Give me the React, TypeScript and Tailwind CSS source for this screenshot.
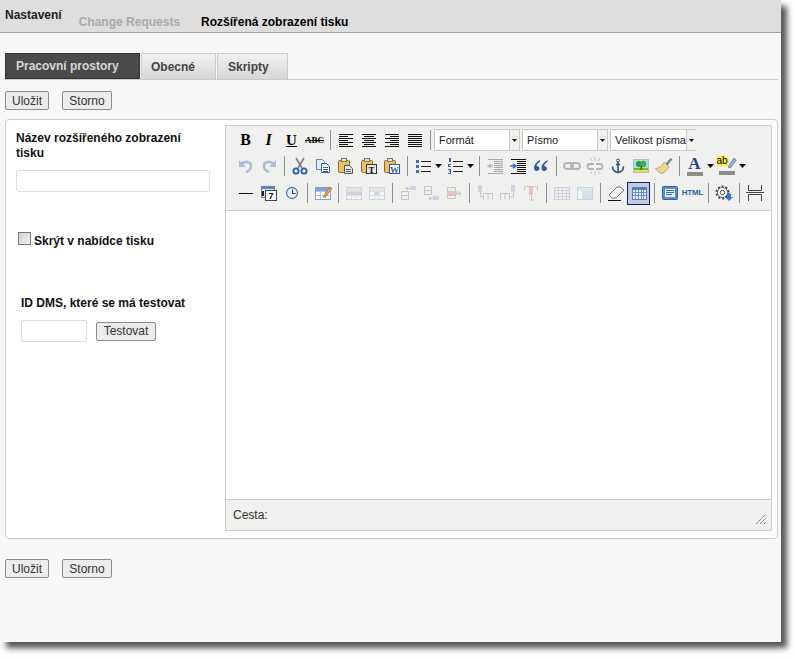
import React from "react";

const Svg = ({ children, dim }: { children: React.ReactNode; dim?: boolean }) => (
  <svg width="20" height="20" viewBox="0 0 20 20" fill="none" className={dim ? "opacity-35" : ""}>
    {children}
  </svg>
);

const Lines = ({ rows }: { rows: [number, number][] }) => (
  <>
    {rows.map(([a, b], i) => (
      <rect key={i} x={a} y={4 + i * 2} width={b - a} height="1" fill="#111" />
    ))}
  </>
);

const Letter = ({ cls, children }: { cls: string; children: React.ReactNode }) => (
  <span className={`leading-none text-black font-['Liberation_Serif',serif] font-bold ${cls}`}>{children}</span>
);

const Clip = ({ x = 2 }: { x?: number }) => (
  <>
    <rect x={x + 0.5} y="4.5" width="11" height="12" rx="1" fill="#e8c264" stroke="#8a6a2a" />
    <rect x={x + 3.5} y="2.5" width="5" height="3" fill="#f3e3b0" stroke="#777" />
  </>
);

const Grid = ({ head, cell }: { head: string; cell?: string }) => (
  <>
    <rect x="2.5" y="4.5" width="15" height="12" fill="#fff" stroke="#8aa0c4" />
    <rect x="3" y="5" width="14" height="3" fill={head} />
    {cell && <rect x="8" y="8" width="5" height="4" fill={cell} />}
    <path d="M3 8.5h14M3 12.5h14M7.5 8v8M12.5 8v8" stroke="#b4c4dc" />
  </>
);

const Split = ({ d }: { d: string }) => <path d={d} stroke="#777" fill="none" />;

const icons: Record<string, React.ReactNode> = {
  b: <Letter cls="text-[16px]">B</Letter>,
  i: <Letter cls="text-[16px] italic">I</Letter>,
  u: <Letter cls="text-[15px] underline">U</Letter>,
  abc: <Letter cls="text-[9px] line-through">ABC</Letter>,
  left: <Svg><Lines rows={[[3, 17], [3, 12], [3, 17], [3, 12], [3, 17], [3, 12], [3, 17]]} /></Svg>,
  center: <Svg><Lines rows={[[3, 17], [5, 15], [3, 17], [5, 15], [3, 17], [5, 15], [3, 17]]} /></Svg>,
  right: <Svg><Lines rows={[[3, 17], [8, 17], [3, 17], [8, 17], [3, 17], [8, 17], [3, 17]]} /></Svg>,
  full: <Svg><Lines rows={[[3, 17], [3, 17], [3, 17], [3, 17], [3, 17], [3, 17], [3, 17]]} /></Svg>,
  undo: <Svg dim><path d="M5 8c3-3 10-3 10 2 0 3-2 5-5 6" stroke="#2f62ac" strokeWidth="2.6" /><path d="M3 4v7h7z" fill="#2f62ac" /></Svg>,
  redo: <Svg dim><path d="M15 8c-3-3-10-3-10 2 0 3 2 5 5 6" stroke="#2f62ac" strokeWidth="2.6" /><path d="M17 4v7h-7z" fill="#2f62ac" /></Svg>,
  cut: (
    <Svg>
      <path d="M6 2l6 10M14 2L8 12" stroke="#7a7f88" strokeWidth="1.6" />
      <circle cx="6" cy="15" r="2.6" stroke="#2b5aa8" strokeWidth="1.8" />
      <circle cx="14" cy="15" r="2.6" stroke="#2b5aa8" strokeWidth="1.8" />
    </Svg>
  ),
  copy: (
    <Svg>
      <path d="M3.5 3.5h6l2 2v8h-8z" fill="#e4eefa" stroke="#5d86c0" />
      <path d="M8.5 7.5h5l3 3v6h-8z" fill="#fff" stroke="#2f62ac" />
      <path d="M10 11.5h5M10 13.5h5M10 15.5h5" stroke="#2f62ac" />
    </Svg>
  ),
  paste: (
    <Svg>
      <Clip />
      <path d="M8.5 9.5h5l3 3v5h-8z" fill="#e8e8e8" stroke="#555" />
      <path d="M10 13.5h5M10 15.5h5" stroke="#555" />
    </Svg>
  ),
  pastetext: (
    <Svg>
      <Clip />
      <rect x="7.5" y="8.5" width="10" height="9" fill="#e8e8e8" stroke="#333" />
      <text x="12.5" y="16.5" textAnchor="middle" fontSize="9" fontWeight="700" fill="#111" fontFamily="Liberation Serif, serif">T</text>
    </Svg>
  ),
  pasteword: (
    <Svg>
      <Clip />
      <rect x="7.5" y="8.5" width="10" height="9" fill="#fff" stroke="#2b5aa8" />
      <text x="12.5" y="16.5" textAnchor="middle" fontSize="9" fontWeight="700" fill="#2b5aa8" fontFamily="Liberation Serif, serif">W</text>
    </Svg>
  ),
  ul: (
    <Svg>
      <path d="M8 5.5h10M8 10.5h10M8 15.5h10" stroke="#222" />
      <path d="M3 4h3v3H3zM3 9h3v3H3zM3 14h3v3H3z" fill="#3d6db5" />
    </Svg>
  ),
  ol: (
    <Svg>
      <path d="M8 5.5h10M8 10.5h10M8 15.5h10" stroke="#222" />
      <path d="M4 2h2v4H4zM3 8h3v1H4v1h2v1H3zM3 13h3v5H3v-1h2v-1H4v-1h1v-1H3z" fill="#2b5aa8" />
    </Svg>
  ),
  outdent: (
    <Svg dim>
      <path d="M3 3.5h15M9 5.5h9M9 7.5h9M9 9.5h9M9 11.5h9M9 13.5h9M9 15.5h9M3 17.5h15" stroke="#222" />
      <path d="M8 10H4M6 8l-3 2 3 2" stroke="#2b5aa8" strokeWidth="1.4" />
    </Svg>
  ),
  indent: (
    <Svg>
      <path d="M3 3.5h15M9 5.5h9M9 7.5h9M9 9.5h9M9 11.5h9M9 13.5h9M9 15.5h9M3 17.5h15" stroke="#111" />
      <path d="M2 10h5M5 8l3 2-3 2" stroke="#2b78d0" strokeWidth="1.6" />
    </Svg>
  ),
  quote: (
    <Svg>
      <path d="M9 4C5 6 3 9 3 12c0 2 1 3 2.5 3S8.500 14 8.500 12.500 7 10 5.500 10C6 8 7.500 6.500 9 6zM16.500 4c-4 2-6 5-6 8 0 2 1 3 2.500 3s3-1 3-2.500S14.500 10 13 10c.5-2 2-3.500 3.500-4z" fill="#2b5aa8" />
    </Svg>
  ),
  link: (
    <Svg dim>
      <rect x="2" y="7" width="9" height="6" rx="3" stroke="#444" strokeWidth="1.8" />
      <rect x="9" y="7" width="9" height="6" rx="3" stroke="#444" strokeWidth="1.8" />
    </Svg>
  ),
  unlink: (
    <Svg dim>
      <path d="M9 8H5a2.500 2.500 0 000 5h4M11 8h4a2.500 2.500 0 010 5h-4" stroke="#444" strokeWidth="1.8" />
      <path d="M10 1v4M10 15v4M5 2l2 3M15 2l-2 3M5 18l2-3M15 18l-2-3" stroke="#666" />
    </Svg>
  ),
  anchor: (
    <Svg>
      <circle cx="10" cy="4.5" r="1.5" stroke="#2f4f80" />
      <path d="M10 6v10M8 8.5h4" stroke="#2f4f80" strokeWidth="1.6" />
      <path d="M4.500 10.500c0 3.500 2.500 5.500 5.500 6 3-.5 5.500-2.500 5.500-6" stroke="#2f4f80" strokeWidth="1.6" />
    </Svg>
  ),
  image: (
    <Svg>
      <rect x="2.5" y="3.5" width="15" height="13" fill="#a8dcef" stroke="#bbb" />
      <rect x="3" y="12" width="14" height="2" fill="#5ec04a" />
      <rect x="3" y="14" width="14" height="2" fill="#eee04a" />
      <circle cx="8" cy="8" r="3" fill="#2f9a34" />
      <circle cx="12" cy="8" r="3.2" fill="#3fae3f" />
      <rect x="9.5" y="10" width="1.5" height="4" fill="#6a4a20" />
    </Svg>
  ),
  clean: (
    <Svg>
      <path d="M11 8l5.500-6 2 1.500-5.500 6.500z" fill="#7f8794" />
      <path d="M10 6l5 5c-2 3.500-4.500 5.500-7 6.500-2.500-.5-5-2.500-6.500-5 3.500 0 6.500-2.500 8.500-6.500z" fill="#ecd68e" stroke="#a8924e" strokeWidth=".7" />
    </Svg>
  ),
  fore: (
    <div className="relative flex h-5 w-5 flex-col items-center">
      <span className="font-['Liberation_Serif',serif] text-[17px] font-bold leading-[15px] text-[#23427e]">A</span>
      <span className="mt-px h-1 w-4 bg-[#8c8c8c]" />
    </div>
  ),
  back: (
    <div className="relative flex h-5 w-5 flex-col">
      <div className="flex h-[15px] items-start">
        <span className="h-2.5 bg-[#ffee44] font-['Liberation_Sans',sans-serif] text-[10px] leading-[9px] text-black">ab</span>
        <svg width="9" height="13" viewBox="0 0 9 13" fill="none"><path d="M0 11l6-9 2.500 2-6 8z" fill="#8fb0dc" stroke="#55709c" strokeWidth=".7" /></svg>
      </div>
      <span className="ml-0.5 h-1 w-4 bg-[#8c8c8c]" />
    </div>
  ),
  hr: <Svg><rect x="3" y="10" width="14" height="1" fill="#111" /></Svg>,
  date: (
    <Svg>
      <rect x="2.5" y="3.5" width="13" height="11" fill="#dfe6f2" stroke="#5d7fb4" />
      <rect x="3" y="4" width="12" height="2" fill="#5d86c0" />
      <rect x="6.5" y="7.5" width="11" height="10" fill="#f4f4f4" stroke="#444" />
      <text x="12" y="16" textAnchor="middle" fontSize="9" fontWeight="700" fill="#111" fontFamily="Liberation Sans, sans-serif">7</text>
      <rect x="3" y="8" width="2" height="5" fill="#222" />
    </Svg>
  ),
  time: (
    <Svg>
      <circle cx="10" cy="10" r="5.5" fill="#e8eef8" stroke="#4f78b4" strokeWidth="1.3" />
      <path d="M10.500 6.500v4h3" stroke="#333" />
    </Svg>
  ),
  table: (
    <Svg>
      <Grid head="#7ea4d8" />
      <path d="M11 12l6-8 2 1.500-6 8-2.500.8z" fill="#e8a84a" stroke="#8a5a20" strokeWidth=".6" />
    </Svg>
  ),
  rowp: <Svg dim><Grid head="#cfcfcf" /><rect x="3" y="9" width="14" height="3" fill="#8aa0c4" /></Svg>,
  cellp: <Svg dim><Grid head="#cfcfcf" cell="#7ea4d8" /></Svg>,
  rowb: <Svg dim><Split d="M3.500 8.500h7v8h-7zM3.500 12.500h7" /><path d="M8 5.500h4M10 3.500L8 5.500l2 2" stroke="#777" /><rect x="12" y="3" width="6" height="4" fill="#7ea4d8" /></Svg>,
  rowa: <Svg dim><Split d="M3.500 3.500h7v8h-7zM3.500 7.500h7" /><path d="M8 15.500h4M10 13.500l-2 2 2 2" stroke="#777" /><rect x="12" y="13" width="6" height="4" fill="#7ea4d8" /></Svg>,
  rowd: <Svg dim><Split d="M3.500 4.500h8v11h-8zM3.500 8.500h8M3.500 12.500h8" /><rect x="3" y="8" width="10" height="4" fill="#e07070" /><path d="M13 10.500h4M15 8.500l2 2-2 2" stroke="#777" /></Svg>,
  colb: <Svg dim><Split d="M8.500 16.500v-6h9v6M13 10.500v6" /><rect x="3" y="2" width="4" height="7" fill="#7ea4d8" /><path d="M5.500 9v5h3" stroke="#777" /></Svg>,
  cola: <Svg dim><Split d="M2.500 16.500v-6h9v6M7 10.500v6" /><rect x="13" y="2" width="4" height="7" fill="#7ea4d8" /><path d="M15.500 9v5h-3" stroke="#777" /></Svg>,
  cold: <Svg dim><path d="M3.500 7.500v-4h13v4" stroke="#777" /><rect x="8" y="3" width="4" height="9" fill="#e07070" /><path d="M10.500 12v6M8.500 16l2 2 2-2" stroke="#777" /></Svg>,
  split: (
    <Svg dim>
      <rect x="2.5" y="4.5" width="15" height="12" fill="#e8eef8" stroke="#7e9ac4" />
      <path d="M3 7.500h14M3 10.500h14M3 13.500h14M6.500 5v11M10.500 5v11M14.500 5v11" stroke="#8aa0c4" />
    </Svg>
  ),
  merge: (
    <Svg dim>
      <rect x="2.5" y="4.5" width="15" height="12" fill="#fff" stroke="#7e9ac4" />
      <rect x="7" y="8" width="10" height="8" fill="#a4bee2" />
      <rect x="3" y="5" width="14" height="3" fill="#c4d6ee" />
    </Svg>
  ),
  eraser: (
    <Svg>
      <path d="M3 12l8-8h3l4 3-8 8H6z" fill="#f2f2f2" stroke="#777" />
      <rect x="2" y="17" width="13" height="1" fill="#111" />
    </Svg>
  ),
  visual: (
    <Svg>
      <rect x="3.5" y="4.5" width="14" height="12" fill="#e8eef8" stroke="#5d7fb4" />
      <rect x="4" y="5" width="13" height="2" fill="#5d7fb4" />
      <path d="M4 9.500h13M4 12.500h13M6.500 7v9M9.500 7v9M12.500 7v9M14.500 7v9" stroke="#6f8fc0" />
    </Svg>
  ),
  props: (
    <Svg>
      <rect x="2.5" y="3.5" width="15" height="13" rx="1" fill="#5d8fd0" stroke="#2f5f9f" />
      <rect x="5" y="6" width="10" height="8" fill="#e8f0fa" />
      <path d="M6 7.500h8M6 9.500h8M6 11.500h6" stroke="#3d6db5" />
    </Svg>
  ),
  html: <span className="font-['Liberation_Sans',sans-serif] text-[8px] font-bold leading-none tracking-tight text-[#2b5aa8]">HTML</span>,
  tplus: (
    <Svg>
      <circle cx="8.5" cy="9.5" r="6" stroke="#444" strokeWidth="2" strokeDasharray="2 1.8" />
      <circle cx="8.5" cy="9.5" r="5" fill="#fff" stroke="#444" strokeWidth=".8" />
      <circle cx="8.5" cy="9.5" r="2.2" stroke="#444" />
      <path d="M13 11h4v3h2l-4 4-4-4h2z" fill="#2b78d0" />
    </Svg>
  ),
  page: <Svg><path d="M3.500 2v5.500h13V2M3.500 18v-6.500h13V18M1 9.500h18" stroke="#444" /></Svg>,
};

const Cell = ({ n }: { n: string }) => <div className="flex h-5 w-[23px] shrink-0 items-center justify-center">{icons[n]}</div>;

const Sep = () => (
  <div className="flex h-5 w-2 shrink-0 justify-start pl-1">
    <span className="h-full w-px bg-[#8f8f9a]" />
  </div>
);

const Arrow = () => (
  <div className="flex h-5 w-[9px] shrink-0 items-center justify-center">
    <svg width="7" height="4" viewBox="0 0 7 4"><path d="M0 0h7L3.500 4z" fill="#111" /></svg>
  </div>
);

const Drop = ({ label }: { label: string }) => (
  <div className="mr-0.5 flex h-[22px] w-[86px] shrink-0 border border-[#ccc] bg-white">
    <span className="flex-1 whitespace-nowrap pl-1 text-[11px] leading-[20px] text-[#222]">{label}</span>
    <span className="flex w-[10px] shrink-0 items-center justify-center border-l border-[#ccc] bg-[#f0f0ee]">
      <svg width="5" height="3" viewBox="0 0 5 3"><path d="M0 0h5L2.500 3z" fill="#111" /></svg>
    </span>
  </div>
);

const Row = ({ items }: { items: string[] }) => (
  <div className="flex h-[26px] items-center pl-2">
    {items.map((n, i) =>
      n === "|" ? <Sep key={i} /> : n === "v" ? <Arrow key={i} /> : n === "*" ? (
        <div key={i} className="flex h-[23px] w-[23px] shrink-0 items-center justify-center border border-[#0a246a] bg-[#c2cbe0]">{icons.visual}</div>
      ) : <Cell key={i} n={n} />
    )}
  </div>
);

const Btn = ({ children, w }: { children: React.ReactNode; w: string }) => (
  <button className={`${w} h-[19px] rounded-[2px] border border-[#8c8c8c] bg-[#ececec] text-center text-[12px] leading-[16px] text-[#333]`}>{children}</button>
);

const Actions = () => (
  <div className="flex gap-[13px]">
    <Btn w="w-[44px]">Uložit</Btn>
    <Btn w="w-[50px]">Storno</Btn>
  </div>
);

const Tab = ({ children, active, w, pad }: { children: React.ReactNode; active?: boolean; w: string; pad: string }) => (
  <div className={`${w} ${pad} flex h-[26px] items-center text-[12px] font-bold ${active ? "border border-[#333] bg-[#4a4a4a] text-[#d8d8d8]" : "border border-b-0 border-[#ccc] bg-gradient-to-b from-[#f2f2f2] to-[#d6d6d6] text-[#444]"}`}>
    {children}
  </div>
);

export default function App() {
  return (
    <div className="h-[661px] w-[797px] overflow-hidden bg-white font-['Liberation_Sans',Arial,sans-serif]">
      <div className="flex h-[642px] w-[781px] flex-col bg-[#f7f7f7] shadow-[6px_6px_6px_#555]">
        <div className="flex h-[33px] shrink-0 border-b border-[#a0a0a0] bg-[#dedede] text-[12px] font-bold">
          <span className="ml-[5px] mt-[8px] leading-[14px] text-[#222]">Nastavení</span>
          <span className="ml-[17px] mt-[15px] leading-[14px] text-[#aaa]">Change Requests</span>
          <span className="ml-[21px] mt-[15px] leading-[14px] text-black">Rozšířená zobrazení tisku</span>
        </div>

        <div className="ml-[5px] mr-[3px] mt-5 flex gap-px border-b border-[#ccc]">
          <Tab active w="w-[135px]" pad="pl-[10px]">Pracovní prostory</Tab>
          <Tab w="w-[75px]" pad="pl-[9px]">Obecné</Tab>
          <Tab w="w-[71px]" pad="pl-[10px]">Skripty</Tab>
        </div>

        <div className="ml-[5px] mt-[11px]"><Actions /></div>

        <div className="ml-[5px] mt-[9px] flex h-[420px] w-[773px] rounded-[4px] border border-[#ccc] bg-white">
          <div className="w-[219px] shrink-0 pl-[10px] pt-[11px]">
            <div className="w-[190px] text-[12px] font-bold leading-[15px] text-[#111]">Název rozšířeného zobrazení tisku</div>
            <input className="mt-[9px] block h-[22px] w-[194px] rounded-[2px] border border-[#ddd] bg-white" />
            <div className="ml-0.5 mt-10 flex items-start">
              <span className="h-[13px] w-[13px] border border-[#777] bg-gradient-to-br from-[#d0d0d0] to-[#f4f4f4]" />
              <span className="ml-[3px] mt-[2px] text-[12px] font-bold leading-[15px] text-[#111]">Skrýt v nabídce tisku</span>
            </div>
            <div className="ml-[5px] mt-[47px] text-[12px] font-bold leading-[15px] text-[#111]">ID DMS, které se má testovat</div>
            <div className="ml-[5px] mt-[9px] flex items-center gap-[9px]">
              <input className="block h-[22px] w-[66px] rounded-[2px] border border-[#ddd] bg-white" />
              <Btn w="w-[60px]">Testovat</Btn>
            </div>
          </div>

          <div className="mt-[5px] flex h-[406px] w-[547px] flex-col border border-[#ccc]">
            <div className="h-[84px] shrink-0 bg-[#f0f0ee] pt-px">
              <div className="flex h-[26px] items-center pl-2">
                {["b", "i", "u", "abc"].map((n) => <Cell key={n} n={n} />)}
                <Sep />
                {["left", "center", "right", "full"].map((n) => <Cell key={n} n={n} />)}
                <Sep />
                <Drop label="Formát" />
                <Drop label="Písmo" />
                <Drop label="Velikost písma" />
              </div>
              <Row items={["undo", "redo", "|", "cut", "copy", "paste", "pastetext", "pasteword", "|", "ul", "v", "ol", "v", "|", "outdent", "indent", "quote", "|", "link", "unlink", "anchor", "image", "clean", "|", "fore", "v", "back", "v"]} />
              <div className="mt-px">
                <Row items={["hr", "date", "time", "|", "table", "|", "rowp", "cellp", "|", "rowb", "rowa", "rowd", "|", "colb", "cola", "cold", "|", "split", "merge", "|", "eraser", "*", "|", "props", "html", "|", "tplus", "|", "page"]} />
              </div>
            </div>
            <div className="flex-1 border-y border-[#ccc] bg-white" />
            <div className="flex h-[30px] shrink-0 items-center justify-between bg-[#f0f0ee] pl-[7px] pr-1">
              <span className="text-[12px] text-[#333]">Cesta:</span>
              <svg width="11" height="11" viewBox="0 0 11 11" className="mt-[9px]">
                <path d="M0 10l10-10M4 10l6-6M8 10l2-2" stroke="#777" strokeDasharray="1.5 .5" />
              </svg>
            </div>
          </div>
        </div>

        <div className="ml-[5px] mt-5"><Actions /></div>
      </div>
    </div>
  );
}
